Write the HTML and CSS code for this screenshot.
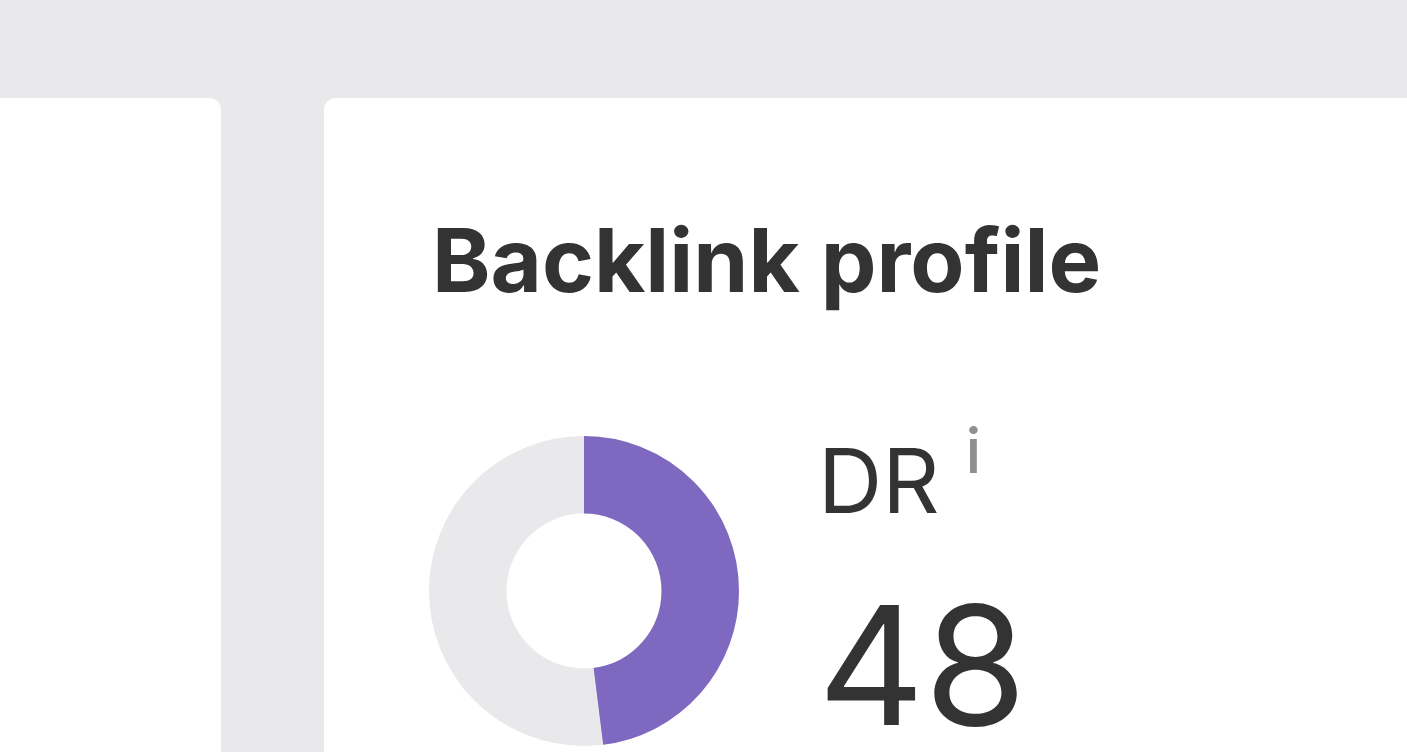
FILE: index.html
```html
<!DOCTYPE html>
<html lang="en">
<head>
<meta charset="utf-8">
<title>Backlink profile</title>
<link rel="stylesheet" href="styles.css">
</head>
<body>
<div class="layout">
  <aside class="card card-side"></aside>
  <main class="card card-main">
    <h1 class="title">Backlink profile</h1>
    <div class="metric">
      <svg class="donut" viewBox="0 0 310 310" width="310" height="310" aria-hidden="true">
        <circle cx="155" cy="155" r="116.25" fill="none" stroke="#e9e9ec" stroke-width="77.5"/>
        <circle cx="155" cy="155" r="116.25" fill="none" stroke="#7f68bf" stroke-width="77.5"
                stroke-dasharray="350.6 1000" transform="rotate(-90 155 155)"/>
      </svg>
      <div class="stat">
        <div class="stat-label">DR<span class="info">i</span></div>
        <div class="stat-value">48</div>
      </div>
    </div>
  </main>
</div>
</body>
</html>
```
FILE: styles.css
```css
html, body {
  margin: 0;
  padding: 0;
  background: #e9e9eb;
  font-family: Inter, "Noto Sans", "Liberation Sans", sans-serif;
  color: #333333;
  overflow: hidden;
  height: 752px;
}

.layout {
  display: flex;
  gap: 103px;
  padding-top: 98px;
  height: 752px;
  box-sizing: border-box;
}

.card {
  background: #ffffff;
  border-radius: 12px;
  overflow: hidden;
}

.card-side {
  width: 221px;
  flex: none;
  border-top-left-radius: 0;
  border-bottom-left-radius: 0;
  border-bottom-right-radius: 0;
}

.card-main {
  flex: 1;
  padding: 118px 0 0 108px;
  border-top-right-radius: 0;
  border-bottom-left-radius: 0;
  border-bottom-right-radius: 0;
}

.title {
  margin: 0;
  font-size: 88.5px;
  line-height: 1;
  font-weight: 700;
  color: #333333;
}

.metric {
  display: flex;
  align-items: flex-start;
  gap: 79px;
  margin-top: 131px;
  margin-left: -3px;
}

.donut {
  display: block;
  flex: none;
}

.stat {
  display: flex;
  flex-direction: column;
  gap: 74px;
}

.stat-label {
  font-size: 89px;
  line-height: 1;
  font-weight: 400;
  display: flex;
  align-items: flex-start;
}

.info {
  font-size: 63px;
  line-height: 1;
  font-weight: 500;
  color: #8e8e93;
  margin-left: 26px;
  margin-top: -17px;
}

.stat-value {
  font-size: 165px;
  line-height: 0.8;
  font-weight: 400;
}
```
